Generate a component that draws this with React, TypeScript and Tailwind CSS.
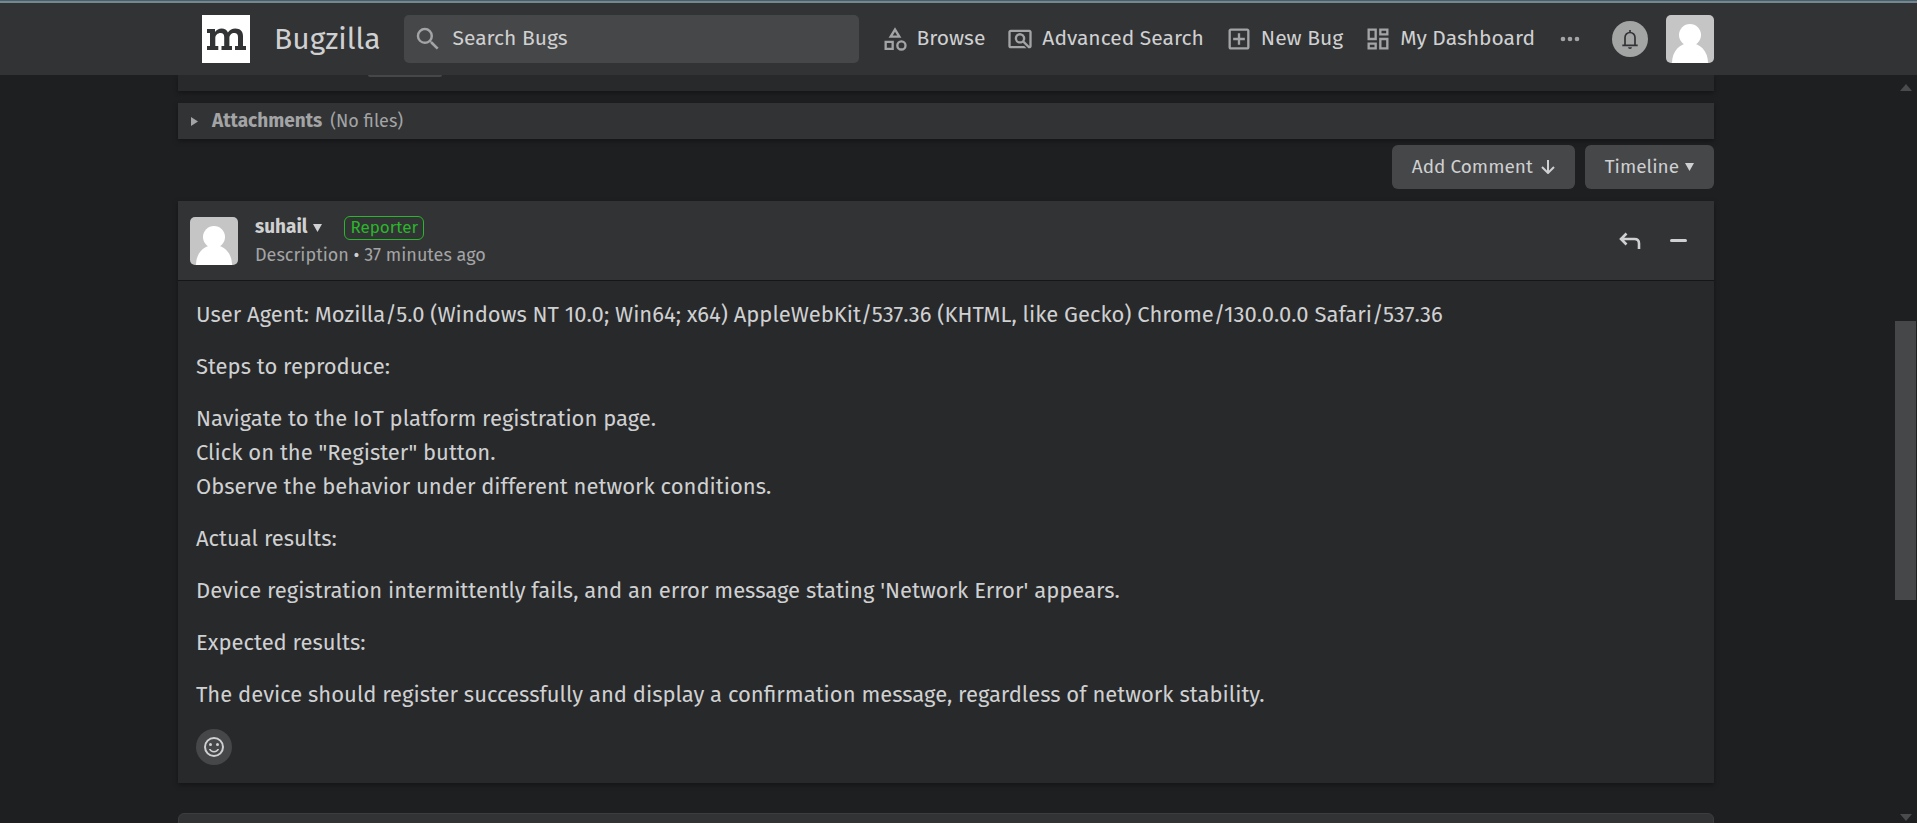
import React from "react";

const paragraphs: string[][] = [
  ["User Agent: Mozilla/5.0 (Windows NT 10.0; Win64; x64) AppleWebKit/537.36 (KHTML, like Gecko) Chrome/130.0.0.0 Safari/537.36"],
  ["Steps to reproduce:"],
  [
    "Navigate to the IoT platform registration page.",
    'Click on the "Register" button.',
    "Observe the behavior under different network conditions.",
  ],
  ["Actual results:"],
  ["Device registration intermittently fails, and an error message stating 'Network Error' appears."],
  ["Expected results:"],
  ["The device should register successfully and display a confirmation message, regardless of network stability."],
];

function Icon({ d, className = "size-7 text-[#a3a4a5]" }: { d: string; className?: string }) {
  return (
    <svg viewBox="0 0 24 24" fill="currentColor" fillRule="evenodd" className={`shrink-0 ${className}`} aria-hidden="true">
      <path d={d} />
    </svg>
  );
}

const icons = {
  search:
    "M15.5 14h-.79l-.28-.27A6.471 6.471 0 0 0 16 9.5 6.5 6.5 0 1 0 9.5 16c1.61 0 3.09-.59 4.23-1.57l.27.28v.79l5 4.99L20.49 19l-4.99-5zm-6 0C7.01 14 5 11.99 5 9.5S7.01 5 9.5 5 14 7.01 14 9.5 11.99 14 9.5 14z",
  browse:
    "M12 2l-5.5 9h11L12 2zm0 3.84L13.93 9h-3.87L12 5.84zM17.5 13a4.5 4.5 0 1 0 0 9 4.5 4.5 0 0 0 0-9zm0 7a2.5 2.5 0 1 1 0-5 2.5 2.5 0 0 1 0 5zM3 21.5h8v-8H3v8zm2-6h4v4H5v-4z",
  advanced:
    "M20 4H4c-1.1 0-2 .9-2 2v12c0 1.1.9 2 2 2h13.6l-2-2H4V6h16v12l-4.18-4.18A4.5 4.5 0 1 0 14.4 15.24L19.17 20H20c1.1 0 2-.9 2-2V6c0-1.1-.9-2-2-2zM12 14a2.5 2.5 0 1 1 0-5 2.5 2.5 0 0 1 0 5z",
  add:
    "M19 3H5c-1.1 0-2 .9-2 2v14c0 1.1.9 2 2 2h14c1.1 0 2-.9 2-2V5c0-1.1-.9-2-2-2zm0 16H5V5h14v14zM11 17h2v-4h4v-2h-4V7h-2v4H7v2h4z",
  dashboard:
    "M19 5v2h-4V5h4M9 5v6H5V5h4m10 8v6h-4v-6h4M9 17v2H5v-2h4M21 3h-8v6h8V3zM11 3H3v10h8V3zm10 8h-8v10h8V11zm-10 4H3v6h8v-6z",
  more:
    "M6 10a2 2 0 1 0 0 4 2 2 0 0 0 0-4zm12 0a2 2 0 1 0 0 4 2 2 0 0 0 0-4zm-6 0a2 2 0 1 0 0 4 2 2 0 0 0 0-4z",
  smile:
    "M12 2a10 10 0 1 0 0 20 10 10 0 0 0 0-20zm0 18a8 8 0 1 1 0-16 8 8 0 0 1 0 16zM15.5 11a1.5 1.5 0 1 0 0-3 1.5 1.5 0 0 0 0 3zM8.5 11a1.5 1.5 0 1 0 0-3 1.5 1.5 0 0 0 0 3zM12 16c-1.48 0-2.75-.81-3.45-2H6.88a5.5 5.5 0 0 0 10.24 0h-1.67A4 4 0 0 1 12 16z",
};

function Avatar() {
  return (
    <svg viewBox="0 0 48 48" className="size-12 shrink-0 rounded-[5px] bg-[#c5c5c5]" role="img" aria-label="User avatar">
      <circle cx="24" cy="20" r="11" fill="#fff" />
      <path d="M6 48C6 36 14 28 24 28s18 8 18 20z" fill="#fff" />
    </svg>
  );
}

function Caret() {
  return (
    <svg viewBox="0 0 9 8" className="h-2 w-[9px] shrink-0" fill="currentColor" aria-hidden="true">
      <path d="M0 0h9L4.5 8z" />
    </svg>
  );
}

function NavLink({ d, children }: { d: string; children: React.ReactNode }) {
  return (
    <a href="#" className="flex items-center gap-2 whitespace-nowrap text-[21px]">
      <Icon d={d} />
      {children}
    </a>
  );
}

function Header() {
  return (
    <header className="border-t border-[#4c5f69] bg-[#323335]">
      <div className="h-0.5 bg-[#728993]" />
      <div className="pr-[25px]">
        <div className="mx-auto flex h-[72px] max-w-[1536px] items-center pl-6">
          <a href="#" aria-label="Mozilla" className="flex size-12 shrink-0 items-center justify-center bg-white">
            <svg viewBox="0 0 39 23" className="h-[23px] w-[39px]" fill="#323335" aria-hidden="true">
              <path d="M0 1h8v3c1.6-2.4 3.9-3.6 6.6-3.6 3 0 5.3 1.4 6.3 4C22.6 1.8 25.3.4 28.4.4c4.6 0 7.6 2.7 7.6 7.6v10h3v4H28v-4h3V9c0-2.7-1.3-4-3.6-4-3 0-5 2.1-5 5v8h2.6v4H14.5v-4h2.7V9c0-2.7-1.3-4-3.5-4-3.2 0-5.4 2.2-5.4 5v8h3v4H0v-4h3V5H0z" />
            </svg>
          </a>
          <a href="#" className="ml-6 text-[30px]">Bugzilla</a>
          <label className="ml-[23px] flex h-12 min-w-0 flex-1 items-center gap-2.5 rounded-[5px] bg-[#464749] px-[9px]">
            <Icon d={icons.search} className="size-[30px] text-[#a3a4a5]" />
            <input
              type="search"
              aria-label="Search Bugs"
              placeholder="Search Bugs"
              className="w-full min-w-0 bg-transparent text-[21px] outline-none placeholder:text-[#cfd0d1]"
            />
          </label>
          <nav className="ml-[22px] flex items-center gap-[21px]">
            <NavLink d={icons.browse}>Browse</NavLink>
            <NavLink d={icons.advanced}>Advanced Search</NavLink>
            <NavLink d={icons.add}>New Bug</NavLink>
            <NavLink d={icons.dashboard}>My Dashboard</NavLink>
            <button type="button" aria-label="More">
              <Icon d={icons.more} />
            </button>
          </nav>
          <button type="button" aria-label="Notifications" className="ml-7 flex size-9 shrink-0 items-center justify-center rounded-full bg-[#a3a4a4]">
            <svg viewBox="0 0 24 24" className="size-6" fill="none" stroke="#323335" strokeWidth="1.7" aria-hidden="true">
              <path d="M4.3 18.3h15.4M7 18.3V10.5a5 5 0 0 1 10 0v7.8M12 3v2.5" />
              <path d="M10 20.3h4a2 1.6 0 0 1-4 0z" fill="#323335" stroke="none" />
            </svg>
          </button>
          <button type="button" aria-label="Account" className="ml-[18px]">
            <Avatar />
          </button>
        </div>
      </div>
    </header>
  );
}

function Comment() {
  return (
    <article className="mt-3 bg-[#28292b] shadow-[0_2px_5px_rgba(0,0,0,0.35)]">
      <header className="flex h-20 items-center border-b border-[#151617] bg-[#323335] px-3">
        <Avatar />
        <div className="ml-[17px] flex flex-col gap-0.5">
          <div className="flex h-[26px] items-center">
            <button type="button" className="flex items-center gap-1.5 text-[19px] font-bold">
              suhail
              <Caret />
            </button>
            <span className="ml-[22px] flex h-6 items-center rounded-md border border-[#2ab62a] px-[5px] text-[17px] text-[#2ab62a]">
              Reporter
            </span>
          </div>
          <div className="text-[18px] leading-6 text-[#a3a4a5]">
            <a href="#">Description</a> <span className="text-[#cfd0d1]">•</span> <a href="#">37 minutes ago</a>
          </div>
        </div>
        <button type="button" aria-label="Reply" className="ml-auto flex size-12 items-center justify-center">
          <svg viewBox="0 0 22 18" className="h-[18px] w-[22px]" fill="none" stroke="currentColor" strokeWidth="2.6" aria-hidden="true">
            <path d="M7.5 1.5 2 7l5.5 5.5M2 7h13.5Q20 7 20 11.5V17" />
          </svg>
        </button>
        <button type="button" aria-label="Collapse" className="flex size-12 items-center justify-center">
          <span className="h-[3px] w-[17px] rounded-sm bg-[#cfd0d1]" />
        </button>
      </header>
      <div className="px-[18px] pt-[17px] pb-[18px]">
        <div className="flex flex-col gap-[18px] text-[22px] leading-[34px]">
          {paragraphs.map((lines) => (
            <p key={lines[0]}>
              {lines.map((line) => (
                <span key={line} className="block">{line}</span>
              ))}
            </p>
          ))}
        </div>
        <button type="button" aria-label="Add reaction" className="mt-[17px] flex size-9 items-center justify-center rounded-full bg-[#464749]">
          <Icon d={icons.smile} className="size-6" />
        </button>
      </div>
    </article>
  );
}

function Scrollbar() {
  return (
    <div className="flex w-[25px] shrink-0 flex-col items-center pt-[9px] pb-0.5 pl-0.5 text-[#4a4b4d]" aria-hidden="true">
      <svg viewBox="0 0 12 7" className="h-[7px] w-3" fill="currentColor"><path d="M6 0l6 7H0z" /></svg>
      <div className="grow-[230]" />
      <div className="w-[21px] grow-[279] bg-[#464749]" />
      <div className="grow-[214]" />
      <svg viewBox="0 0 12 7" className="h-[7px] w-3" fill="currentColor"><path d="M0 0h12L6 7z" /></svg>
    </div>
  );
}

export default function App() {
  return (
    <div className="flex h-screen flex-col overflow-hidden bg-[#1e1f21] font-['Fira_Sans','Noto_Sans',sans-serif] text-[#cfd0d1]">
      <Header />
      <div className="flex min-h-0 flex-1">
        <main className="min-w-0 flex-1 overflow-hidden">
          <div className="mx-auto max-w-[1536px]">
            <section className="h-4 bg-[#28292b] pl-[190px] shadow-[0_2px_5px_rgba(0,0,0,0.35)]">
              <div className="h-0.5 w-[74px] rounded-b bg-[#464749]" />
            </section>
            <section className="mt-3 bg-[#323335] shadow-[0_2px_5px_rgba(0,0,0,0.35)]">
              <button type="button" className="flex h-9 items-center px-3 text-[18px] text-[#a3a4a5]">
                <svg viewBox="0 0 8 9" className="mr-3.5 h-[9px] w-2" fill="currentColor" aria-hidden="true">
                  <path d="M1 0l7 4.5L1 9z" />
                </svg>
                <span className="mr-2 text-[19px] font-bold">Attachments</span>
                (No files)
              </button>
            </section>
            <div className="mt-1.5 flex justify-end gap-2.5 text-[19px]">
              <button type="button" className="flex h-11 items-center gap-2 rounded-md bg-[#464749] px-5">
                Add Comment
                <svg viewBox="0 0 14 14" className="size-3.5" fill="none" stroke="currentColor" strokeWidth="2" aria-hidden="true">
                  <path d="M7 0v13M1 7l6 6 6-6" />
                </svg>
              </button>
              <button type="button" className="flex h-11 items-center gap-1.5 rounded-md bg-[#464749] px-5">
                Timeline
                <Caret />
              </button>
            </div>
            <Comment />
            <section className="mt-[30px] h-12 rounded-t-md border border-[#3c3d3f] bg-[#323335]" />
          </div>
        </main>
        <Scrollbar />
      </div>
    </div>
  );
}
